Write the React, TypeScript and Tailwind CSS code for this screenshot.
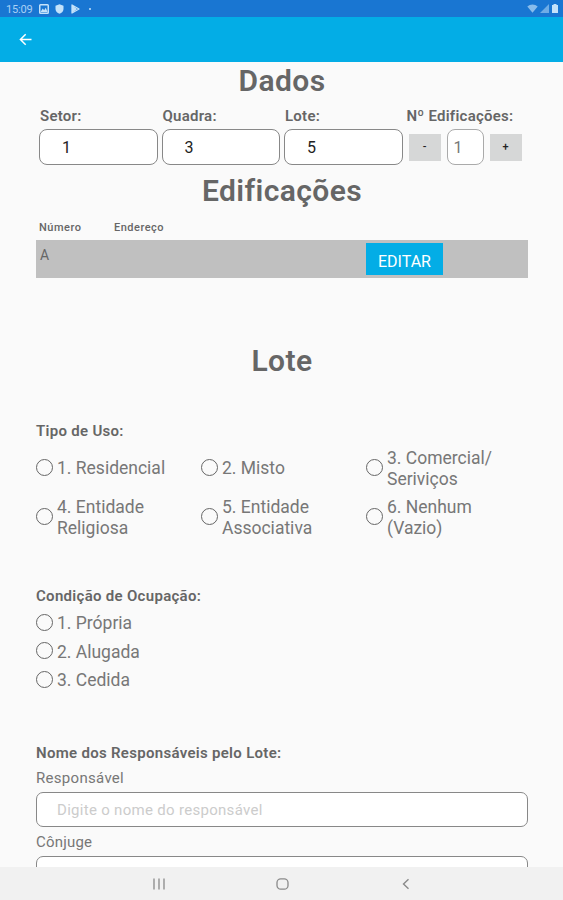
import type { ReactNode } from 'react';

const LOT_FIELDS = [
  { label: 'Setor:', value: '1' },
  { label: 'Quadra:', value: '3' },
  { label: 'Lote:', value: '5' },
];

const USE_TYPES = [
  '1. Residencial',
  '2. Misto',
  '3. Comercial/ Seriviços',
  '4. Entidade Religiosa',
  '5. Entidade Associativa',
  '6. Nenhum (Vazio)',
];

const OCCUPATION = ['1. Própria', '2. Alugada', '3. Cedida'];

function StatusBar() {
  return (
    <div className="flex h-[17px] shrink-0 items-center bg-[#1976d2] pl-[6px] pr-[5px] text-[#c4e2fa]">
      <span className="w-[33px] pt-px text-[11px] leading-none tracking-[-0.2px] text-[#a9d0f5]">15:09</span>
      <svg width="10" height="10" viewBox="0 0 10 10" fill="none" stroke="currentColor">
        <rect x="0.75" y="0.75" width="8.5" height="8.5" rx="0.8" strokeWidth="1.5" />
        <path d="M1.5 8l2.2-3.4 1.5 1.7L6.7 3.8 8.6 8z" fill="currentColor" stroke="none" />
      </svg>
      <svg className="ml-[6px]" width="9" height="10" viewBox="0 0 9 10" fill="currentColor">
        <path d="M4.5 0.3L8.5 1.8v3.1c0 2.2-1.7 4-4 4.8-2.3-.8-4-2.6-4-4.8V1.8z" />
      </svg>
      <svg className="ml-[7px]" width="9" height="10" viewBox="0 0 9 10" fill="none" stroke="currentColor">
        <path d="M1 1l7 4-7 4z" strokeWidth="1.3" strokeLinejoin="round" />
        <path d="M1 1l5 4-5 4z" fill="currentColor" stroke="none" />
      </svg>
      <span className="ml-[9px] size-[2px] rounded-full bg-[#c4e2fa]" />
      <svg className="ml-auto" width="11" height="9" viewBox="0 0 11 9" fill="currentColor">
        <path d="M0.3 2.6C3.3-.2 7.700-.2 10.700 2.600L5.500 8.700z" opacity="0.65" />
      </svg>
      <svg className="ml-[2px]" width="9" height="9" viewBox="0 0 9 9" fill="currentColor">
        <path d="M9 0v9H0z" opacity="0.5" />
      </svg>
      <svg className="ml-[3px]" width="6" height="9" viewBox="0 0 6 9" fill="currentColor">
        <path d="M1.5 0h3v1H6v8H0V1h1.500z" />
      </svg>
    </div>
  );
}

function TopBar() {
  return (
    <header className="flex h-[45px] shrink-0 items-center bg-[#03ade6] pl-[19px] text-white">
      <svg width="13" height="13" viewBox="0 0 13 13" fill="none" stroke="currentColor" strokeWidth="1.5">
        <path d="M12.5 6.5H1.7M6.7 1.2L1.4 6.5l5.3 5.3" />
      </svg>
    </header>
  );
}

function Heading({ children }: { children: ReactNode }) {
  return (
    <h2 className="text-center text-[30px] font-semibold leading-[38px] tracking-[0.4px]">{children}</h2>
  );
}

function Radio({ label }: { label: string }) {
  return (
    <label className="flex items-center gap-[4px]">
      <span className="size-[17px] shrink-0 rounded-full border-[1.5px] border-[#666]" />
      <span className="relative top-px text-[17.5px] leading-[20.5px] text-[#777]">{label}</span>
    </label>
  );
}

function StepButton({ children }: { children: ReactNode }) {
  return (
    <button className="h-[27px] w-[32px] bg-[#d6d7d7] text-[11px] font-medium text-[#222]">{children}</button>
  );
}

function NavBar() {
  return (
    <nav className="flex h-[33px] shrink-0 items-center bg-[#f1f1f1] pl-[153px] pt-px text-[#8a8a8a]">
      <svg width="12" height="12" viewBox="0 0 12 12" fill="none" stroke="currentColor" strokeWidth="1.3">
        <path d="M1 .5v11M6 .5v11M11 .5v11" />
      </svg>
      <svg className="ml-[111px]" width="13" height="12" viewBox="0 0 13 12" fill="none" stroke="currentColor" strokeWidth="1.3">
        <rect x="1" y="0.8" width="11" height="10.4" rx="3.8" />
      </svg>
      <svg className="ml-[113px]" width="8" height="12" viewBox="0 0 8 12" fill="none" stroke="currentColor" strokeWidth="1.4">
        <path d="M6.5 1.2L1.500 6l5 4.800" />
      </svg>
    </nav>
  );
}

export default function App() {
  return (
    <div className="flex h-[900px] w-[563px] flex-col overflow-hidden bg-[#fafafa] font-[Roboto,sans-serif] text-[#666]">
      <StatusBar />
      <TopBar />

      <main className="min-h-0 flex-1 overflow-hidden pl-[36px] pr-[35px]">
        <Heading>Dados</Heading>

        {/* Lot identification */}
        <div className="mt-[6px] flex pl-[3px]">
          {LOT_FIELDS.map((f) => (
            <div key={f.label} className="mr-[4px] w-[118.5px]">
              <p className="h-[23px] pl-px text-[15px] font-semibold leading-[20px] tracking-[0.25px]">{f.label}</p>
              <div className="flex h-[36px] items-center rounded-[8px] border border-[#888] bg-white pl-[22px] pt-px text-[16px] text-[#222]">
                {f.value}
              </div>
            </div>
          ))}
          <div>
            <p className="h-[23px] whitespace-nowrap text-[15px] font-semibold leading-[20px] tracking-[0.25px]">
              Nº Edificações:
            </p>
            <div className="flex items-center pl-[2px]">
              <StepButton>-</StepButton>
              <div className="ml-[6px] mr-[6px] flex h-[36px] w-[37px] items-center rounded-[8px] border border-[#aaa] bg-white pl-[6px] pt-px text-[16px] text-[#777]">
                1
              </div>
              <StepButton>+</StepButton>
            </div>
          </div>
        </div>

        <div className="mt-[7px]">
          <Heading>Edificações</Heading>
        </div>

        {/* Building list */}
        <div className="mt-[9px] flex h-[21px] pl-[3px] pt-px text-[11px] font-medium leading-[16px] tracking-[0.5px]">
          <span className="w-[75px]">Número</span>
          <span>Endereço</span>
        </div>
        <div className="flex h-[38px] bg-[#c0c0c0] pl-[4px]">
          <span className="w-[326px] pt-[5px] text-[14px] leading-[20px]">A</span>
          <button className="mt-[3px] h-[32px] w-[77px] bg-[#03ade6] pt-[5px] text-[16px] leading-none text-white">
            EDITAR
          </button>
        </div>

        <div className="mt-[64px]">
          <Heading>Lote</Heading>
        </div>

        <p className="mt-[41px] text-[15px] font-semibold leading-[20px] tracking-[0.3px]">Tipo de Uso:</p>
        <div className="mt-[6px] grid grid-cols-[165px_165px_135px] gap-y-[8px]">
          {USE_TYPES.map((u) => (
            <Radio key={u} label={u} />
          ))}
        </div>

        <p className="mt-[49px] text-[15px] font-semibold leading-[20px] tracking-[0.3px]">Condição de Ocupação:</p>
        <div className="mt-[6px] flex flex-col gap-[8px]">
          {OCCUPATION.map((o) => (
            <Radio key={o} label={o} />
          ))}
        </div>

        {/* People responsible for the lot */}
        <p className="mt-[53px] text-[15px] font-semibold leading-[20px] tracking-[0.3px]">
          Nome dos Responsáveis pelo Lote:
        </p>
        <p className="mt-[5px] text-[15px] leading-[20px] tracking-[0.3px] text-[#777]">Responsável</p>
        <input
          className="mt-[4px] block h-[35px] w-full rounded-[7px] border-[1.5px] border-[#888] bg-white px-[20px] pt-[2px] text-[15px] tracking-[0.3px] placeholder:text-[#ccc]"
          placeholder="Digite o nome do responsável"
        />
        <p className="mt-[5px] text-[15px] leading-[20px] tracking-[0.2px] text-[#777]">Cônjuge</p>
        <input className="mt-[4px] block h-[35px] w-full rounded-[7px] border-[1.5px] border-[#888] bg-white" />
      </main>

      <NavBar />
    </div>
  );
}
